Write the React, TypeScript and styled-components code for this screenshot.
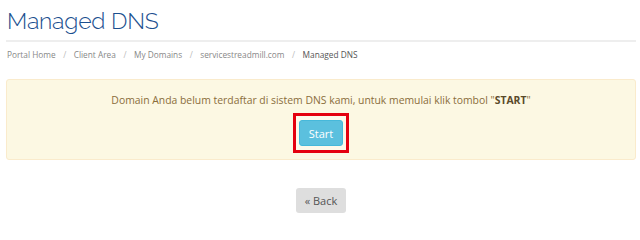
import React from "react";
import styled, { createGlobalStyle } from "styled-components";

const Global = createGlobalStyle`
  html, body { margin: 0; padding: 0; background: #fff; }
  body { font-family: "Open Sans", "Liberation Sans", sans-serif; }
`;

const Page = styled.div`
  padding: 0 4px 0 6px;
  width: 630px;
`;

const Header = styled.div`
  border-bottom: 2px solid #eeeeee;
  padding: 6px 0 4px 1px;
`;

const Title = styled.h1`
  margin: 0;
  font-family: "Raleway", "Open Sans", sans-serif;
  font-weight: 300;
  font-size: 23px;
  line-height: 30px;
  color: #1b4f8f;
  letter-spacing: -0.2px;
`;

const Crumbs = styled.ol`
  list-style: none;
  margin: 0;
  padding: 6px 0 0 1px;
  display: flex;
  font-size: 8.3px;
  line-height: 14px;
  color: #888;
`;

const Crumb = styled.li<{ $active?: boolean }>`
  color: ${(p) => (p.$active ? "#555" : "#888")};
  &:not(:first-child)::before {
    content: "/";
    color: #bbb;
    padding: 0 7.5px;
  }
`;

const Alert = styled.div`
  margin-top: 17px;
  background: #fcf8e3;
  border: 1px solid #faebcc;
  border-radius: 3px;
  height: 81px;
  display: flex;
  flex-direction: column;
  align-items: center;
  padding-top: 12px;
  box-sizing: border-box;
  color: #8a6d3b;
  font-size: 10.4px;
  line-height: 16px;
`;

const Message = styled.p`
  margin: 0;
  strong { color: #5a4a2a; font-weight: 700; }
`;

const Highlight = styled.div`
  margin-top: 5px;
  border: 3px solid #e4000f;
  padding: 4px 3px 4px 3px;
  background: #fdf9ea;
`;

const StartButton = styled.button`
  display: block;
  width: 44px;
  height: 26px;
  border: 1px solid #46b8da;
  border-radius: 3px;
  background: #5bc0de;
  color: #fff;
  font-family: "Open Sans", sans-serif;
  font-size: 11px;
  padding: 0;
`;

const Footer = styled.div`
  display: flex;
  justify-content: center;
  margin-top: 28px;
`;

const BackButton = styled.button`
  width: 50px;
  height: 25px;
  border: none;
  border-radius: 3px;
  background: #dedede;
  color: #555;
  font-family: "Open Sans", sans-serif;
  font-size: 11px;
  padding: 0;
`;

export default function App() {
  return (
    <Page>
      <Global />
      <Header>
        <Title>Managed DNS</Title>
      </Header>
      <Crumbs>
        <Crumb>Portal Home</Crumb>
        <Crumb>Client Area</Crumb>
        <Crumb>My Domains</Crumb>
        <Crumb>servicestreadmill.com</Crumb>
        <Crumb $active>Managed DNS</Crumb>
      </Crumbs>
      <Alert>
        <Message>
          Domain Anda belum terdaftar di sistem DNS kami, untuk memulai klik tombol "<strong>START</strong>"
        </Message>
        <Highlight>
          <StartButton>Start</StartButton>
        </Highlight>
      </Alert>
      <Footer>
        <BackButton>« Back</BackButton>
      </Footer>
    </Page>
  );
}
